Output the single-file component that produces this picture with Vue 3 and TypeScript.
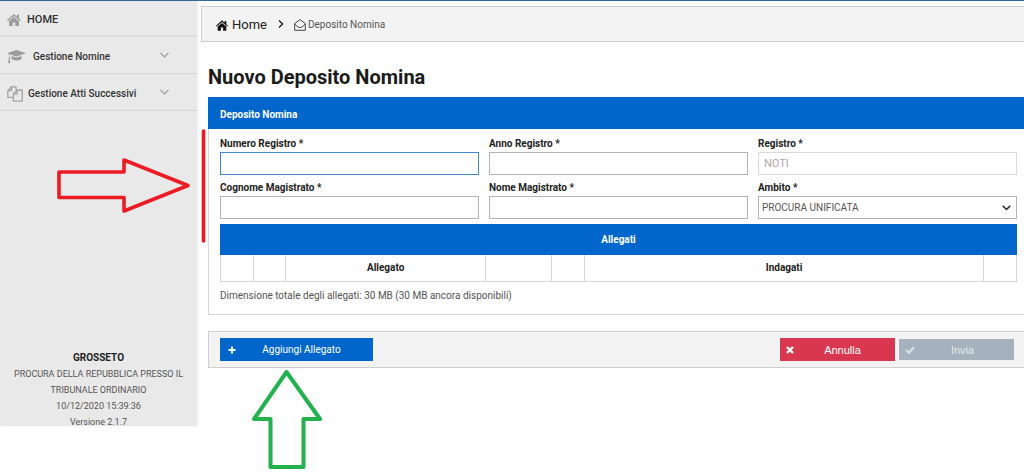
<script setup lang="ts">
import { ref } from 'vue'

const numeroRegistro = ref('')
const annoRegistro = ref('')
const registro = ref('NOTI')
const cognomeMagistrato = ref('')
const nomeMagistrato = ref('')
const ambito = ref('PROCURA UNIFICATA')
const columns: string[] = ['', '', 'Allegato', '', '', 'Indagati', '']
</script>

<template>
  <div class="page">
    <aside class="sidebar">
      <nav class="nav">
        <a class="nav-item home" href="#">
          <svg class="nav-icon" width="14" height="12" viewBox="0 0 14 12">
            <path fill="#9c9c9c" d="M7 0 0 6.300l.8 1L7 2l6.200 5.300.8-1-2-1.800V.8h-2v1.900zM7 3 2 7.200V12h3.700V8.400h2.600V12H12V7.200z" />
          </svg>
          <span class="nav-text">HOME</span>
        </a>
        <a class="nav-item wide" href="#">
          <svg class="nav-icon" width="19" height="14" viewBox="0 0 19 14">
            <path fill="#9c9c9c" d="M9.500 0 0 3.200l2 .8v3.500c-.5.300-.6.800-.2 1.200L1 13h2.300l-.6-4.300c.4-.4.300-.9-.1-1.200V4.300l6.900 2.200L19 3.200zM4.500 6v2.800c1 2.200 9 2.200 10 0V6l-5 1.600z" />
          </svg>
          <span class="nav-text">Gestione Nomine</span>
          <svg class="chevron" width="9" height="6" viewBox="0 0 9 6"><path d="m.5.8 4 4 4-4" /></svg>
        </a>
        <a class="nav-item" href="#">
          <svg class="nav-icon" width="16" height="16" viewBox="0 0 16 16" fill="none" stroke="#a3a3a3" stroke-width="1.300" stroke-linejoin="round">
            <path d="M6 11.400H.8V4.600L4.600.8H9v3M4.600.8v3.800H.8M6.400 15.200V7.800l3.800-3.800h5v11.200zM10.200 4v3.800H6.400" />
          </svg>
          <span class="nav-text">Gestione Atti Successivi</span>
          <svg class="chevron" width="9" height="6" viewBox="0 0 9 6"><path d="m.5.8 4 4 4-4" /></svg>
        </a>
      </nav>
      <div class="office">
        <strong>GROSSETO</strong>
        <span>PROCURA DELLA REPUBBLICA PRESSO IL TRIBUNALE ORDINARIO</span>
        <span>10/12/2020 15:39:36</span>
        <span>Versione 2.1.7</span>
      </div>
    </aside>

    <main class="main">
      <nav class="breadcrumb">
        <a class="crumb-home" href="#">
          <svg width="12" height="11" viewBox="0 0 14 12">
            <path fill="#111" d="M7 0 0 6.300l.8 1L7 2l6.200 5.300.8-1-2-1.800V.8h-2v1.900zM7 3 2 7.200V12h3.700V8.400h2.600V12H12V7.200z" />
          </svg>
          <span>Home</span>
        </a>
        <svg class="separator" width="6" height="8" viewBox="0 0 6 8"><path d="m1 .6 3.600 3.400L1 7.400" fill="none" stroke="#222" stroke-width="1.400" /></svg>
        <a class="crumb-page" href="#">
          <svg width="12" height="12" viewBox="0 0 12 12" fill="none" stroke="#444" stroke-width="1">
            <path d="M.7 4.500 6 .7l5.300 3.800v6.800H.7zM.7 5 3 7.300c2 1.500 4 1.500 6 0L11.300 5" />
          </svg>
          <span>Deposito Nomina</span>
        </a>
      </nav>

      <div class="content">
        <h1>Nuovo Deposito Nomina</h1>

        <section class="panel">
          <h2>Deposito Nomina</h2>
          <form class="panel-body" @submit.prevent>
            <div class="fields">
              <div class="field">
                <label for="numero">Numero Registro *</label>
                <input id="numero" v-model="numeroRegistro" class="active" type="text" />
              </div>
              <div class="field">
                <label for="anno">Anno Registro *</label>
                <input id="anno" v-model="annoRegistro" type="text" />
              </div>
              <div class="field">
                <label for="registro">Registro *</label>
                <input id="registro" v-model="registro" type="text" disabled />
              </div>
              <div class="field">
                <label for="cognome">Cognome Magistrato *</label>
                <input id="cognome" v-model="cognomeMagistrato" type="text" />
              </div>
              <div class="field">
                <label for="nome">Nome Magistrato *</label>
                <input id="nome" v-model="nomeMagistrato" type="text" />
              </div>
              <div class="field">
                <label for="ambito">Ambito *</label>
                <div class="select">
                  <select id="ambito" v-model="ambito">
                    <option>PROCURA UNIFICATA</option>
                  </select>
                  <svg class="select-arrow" width="9" height="6" viewBox="0 0 9 6"><path d="m.7.7 3.800 3.800L8.300.7" fill="none" stroke="#222" stroke-width="1.500" /></svg>
                </div>
              </div>
            </div>

            <table>
              <colgroup>
                <col class="narrow" />
                <col class="narrow" />
                <col class="name" />
                <col class="medium" />
                <col class="narrow" />
                <col />
                <col class="narrow" />
              </colgroup>
              <thead>
                <tr><th class="table-title" :colspan="columns.length">Allegati</th></tr>
                <tr><th v-for="(column, i) in columns" :key="i">{{ column }}</th></tr>
              </thead>
            </table>
            <p class="size-note">Dimensione totale degli allegati: 30 MB (30 MB ancora disponibili)</p>
          </form>
        </section>

        <div class="actions">
          <button class="btn add" type="button">
            <svg width="8" height="8" viewBox="0 0 8 8"><path d="M4 .5v7M.5 4h7" stroke="#fff" stroke-width="2" /></svg>
            <span>Aggiungi Allegato</span>
          </button>
          <div class="actions-end">
            <button class="btn cancel" type="button">
              <svg width="8" height="8" viewBox="0 0 8 8"><path d="m1 1 6 6m0-6L1 7" stroke="#fff" stroke-width="2.400" /></svg>
              <span>Annulla</span>
            </button>
            <button class="btn send" type="button" disabled>
              <svg width="10" height="8" viewBox="0 0 10 8"><path d="m1 4 2.800 2.700L9 1.200" fill="none" stroke="#dce1e5" stroke-width="2.200" /></svg>
              <span>Invia</span>
            </button>
          </div>
        </div>
      </div>
    </main>

    <svg class="mark fields-mark" width="150" height="118" viewBox="0 0 150 118" fill="none" stroke="#ed1c24" stroke-linejoin="round" stroke-linecap="round">
      <path d="M3 45h65V33l64 25.500L68 84V70.500H3z" stroke-width="3.600" />
      <path d="M147.500 4v110" stroke-width="3.600" />
    </svg>
    <svg class="mark add-mark" width="74" height="102" viewBox="0 0 74 102" fill="none" stroke="#22b14c" stroke-width="4" stroke-linejoin="round">
      <path d="M36.500 3 70 50H53.500v48h-33V50H4z" />
    </svg>
  </div>
</template>

<style>
body {
  margin: 0;
  background: #fefefe;
}
</style>

<style scoped>
* {
  box-sizing: border-box;
}

.page {
  position: relative;
  display: flex;
  align-items: flex-start;
  min-height: 100vh;
  overflow: hidden;
  border-top: 1px solid #31669c;
  font-family: Roboto, "Open Sans", sans-serif;
  font-size: 10px;
  line-height: 16px;
  color: #555;
}

a {
  color: inherit;
  text-decoration: none;
}

.sidebar {
  display: flex;
  flex-direction: column;
  flex: none;
  width: 197px;
  height: calc(100vh - 49px);
  overflow: hidden;
  background: #e9e9e9;
  box-shadow: 1px 0 2px #eee;
}

.nav-item {
  display: flex;
  align-items: center;
  gap: 5px;
  height: 37px;
  padding: 3px 28px 0 7px;
  border-bottom: 1px solid #d2d2d2;
  font-weight: 500;
  color: #333;
}

.nav-item.home {
  gap: 6px;
  height: 36px;
  border-bottom: 2px solid #dedede;
  font-size: 11px;
}

.nav-icon {
  flex: none;
}

.nav-item.wide {
  gap: 7px;
}

.nav-text {
  white-space: nowrap;
}

.chevron {
  flex: none;
  margin: 0 0 4px auto;
  fill: none;
  stroke: #999;
  stroke-width: 1.2;
}

.office {
  display: flex;
  flex-direction: column;
  margin: auto 12px -4px;
  text-align: center;
  font-size: 9px;
}

.office strong {
  font-size: 10px;
  color: #222;
}

.main {
  flex: 1;
  min-width: 0;
  padding: 5px 0 0 4px;
}

.breadcrumb {
  display: flex;
  align-items: center;
  height: 36px;
  padding: 2px 0 0 14px;
  border: 1px solid #cecece;
  border-right: 0;
  background: #f3f3f3;
}

.crumb-home,
.crumb-page {
  display: flex;
  align-items: center;
  gap: 4px;
}

.crumb-home {
  font-size: 13px;
  color: #222;
}

.separator {
  margin: 0 10px 2px 11px;
}

.crumb-page {
  gap: 2px;
}

.content {
  padding-left: 7px;
}

h1 {
  margin: 0;
  padding: 23px 0 8px;
  font-size: 20px;
  line-height: 24px;
  color: #1b1b1b;
}

.panel {
  border: 1px solid #d5d5d5;
  border-width: 0 0 1px 1px;
}

h2 {
  margin: 0 0 0 -1px;
  padding: 10px 12px 6px;
  background: #06c;
  color: #fff;
  font-size: 10px;
  line-height: 16px;
}

.panel-body {
  padding: 7px 7px 10px 11px;
}

.fields {
  display: grid;
  grid-template-columns: repeat(3, 1fr);
  gap: 5px 10px;
}

.field {
  min-width: 0;
}

label {
  display: block;
  font-weight: 700;
  color: #222;
}

input,
select {
  display: block;
  width: 100%;
  height: 23px;
  margin: 0;
  padding: 0 5px;
  border: 1px solid #b4b4b4;
  border-radius: 0;
  outline: 0;
  background: #fff;
  color: #555;
  font: 10px/16px Roboto, "Open Sans", sans-serif;
}

input.active {
  border-color: #4189d2;
}

input:disabled {
  border-color: #d9d9d9;
  background: #fefefe;
  color: #aaa;
  font-size: 11px;
}

select {
  padding: 0 3px;
  appearance: none;
}

.select {
  position: relative;
}

.select-arrow {
  position: absolute;
  top: 9px;
  right: 6px;
  pointer-events: none;
}

table {
  width: 100%;
  margin-top: 5px;
  border-collapse: collapse;
  table-layout: fixed;
}

.narrow {
  width: 4.1%;
}

.name {
  width: 25.1%;
}

.medium {
  width: 8.3%;
}

th {
  height: 27px;
  padding: 0;
  border: 1px solid #d5d5d5;
  color: #222;
  font-weight: 700;
}

.table-title {
  height: 30px;
  border-color: #06c;
  background: #06c;
  color: #fff;
}

.size-note {
  margin: 6px 0 0;
}

.actions {
  display: flex;
  align-items: center;
  justify-content: space-between;
  height: 37px;
  margin-top: 16px;
  padding: 0 10px 0 11px;
  border: 1px solid #cecece;
  border-right: 0;
  background: #f3f3f3;
}

.actions-end {
  display: flex;
  align-items: center;
  gap: 4px;
}

.btn {
  display: flex;
  align-items: center;
  width: 115px;
  height: 23px;
  padding: 0 4px 0 6px;
  border: 0;
  border-radius: 0;
  color: #fff;
  font: 11px/16px "Liberation Sans", sans-serif;
}

.btn span {
  flex: 1;
  text-align: center;
}

.btn.add {
  width: 153px;
  padding: 0 6px 0 8px;
  background: #06c;
  font-family: Roboto, "Open Sans", sans-serif;
  font-size: 10px;
}

.btn.cancel {
  background: #d9364f;
}

.btn.send {
  height: 21px;
  background: #a5b1bc;
  color: #e6eaed;
}

.mark {
  position: absolute;
  pointer-events: none;
}

.fields-mark {
  top: 126px;
  left: 56px;
}

.add-mark {
  top: 368px;
  left: 250px;
}
</style>
